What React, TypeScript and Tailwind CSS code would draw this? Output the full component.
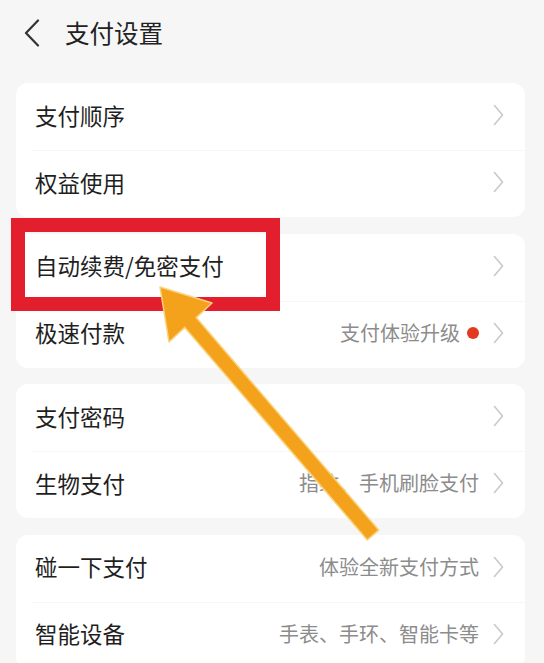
import React from "react";

type Row = { label: string; value?: string; dot?: boolean };

const groups: Row[][] = [
  [{ label: "支付顺序" }, { label: "权益使用" }],
  [{ label: "自动续费/免密支付" }, { label: "极速付款", value: "支付体验升级", dot: true }],
  [{ label: "支付密码" }, { label: "生物支付", value: "指纹、手机刷脸支付" }],
  [
    { label: "碰一下支付", value: "体验全新支付方式" },
    { label: "智能设备", value: "手表、手环、智能卡等" },
  ],
];

function Chevron() {
  return (
    <svg width="11" height="22" viewBox="0 0 11 22" className="shrink-0">
      <path d="M1.5 1.5 L9.5 11 L1.5 20.5" fill="none" stroke="#c9c9c9" strokeWidth="1.6" strokeLinecap="round" strokeLinejoin="round" />
    </svg>
  );
}

function RowItem({ row }: { row: Row }) {
  return (
    <div className="h-[67px] flex items-center pl-[19px] pr-[21px] pb-[3px]">
      <span className="text-[22.5px] leading-none text-[#1f1f1f] flex-1">{row.label}</span>
      {row.value && <span className="text-[20px] leading-none text-[#8c8c8c]">{row.value}</span>}
      {row.dot && <span className="ml-[7px] w-[12px] h-[12px] rounded-full bg-[#e3391f]" />}
      <span className={row.value ? "ml-[14px] flex" : "flex"}>
        <Chevron />
      </span>
    </div>
  );
}

export default function App() {
  return (
    <div className="relative w-[544px] h-[663px] overflow-hidden bg-[#f6f6f6] font-['Noto_Sans_CJK_SC','Noto_Sans',sans-serif]">
      <div className="h-[68px] flex items-center pb-[2px]">
        <svg width="16" height="28" viewBox="0 0 16 28" className="ml-[24px]">
          <path d="M14 1.5 L2 14 L14 26.5" fill="none" stroke="#333333" strokeWidth="2.2" strokeLinecap="round" strokeLinejoin="round" />
        </svg>
        <span className="ml-[25px] text-[24.5px] leading-none text-[#222222]">支付设置</span>
      </div>
      <div className="flex flex-col gap-[16.5px] pt-[15px] pl-[16px] pr-[19px]">
        {groups.map((g, i) => (
          <div key={i} className="bg-white rounded-[12px] flex flex-col">
            <RowItem row={g[0]} />
            <div className="h-px bg-[#f6f6f6] ml-[16px]" />
            <div className="-mt-px">
              <RowItem row={g[1]} />
            </div>
          </div>
        ))}
      </div>

      <div className="absolute left-[11px] top-[218px] w-[269px] h-[93px] border-[14px] border-[#e41f2d]" />

      <svg className="absolute left-0 top-0 pointer-events-none" width="544" height="663" viewBox="0 0 544 663">
        <polygon
          points="160,287 212,303 196.2,317.6 378.7,530.1 367.3,539.9 184.8,327.4 169,342"
          fill="#f4a21c"
          stroke="#f9d27a"
          strokeWidth="1.5"
          strokeLinejoin="round"
        />
      </svg>
    </div>
  );
}
